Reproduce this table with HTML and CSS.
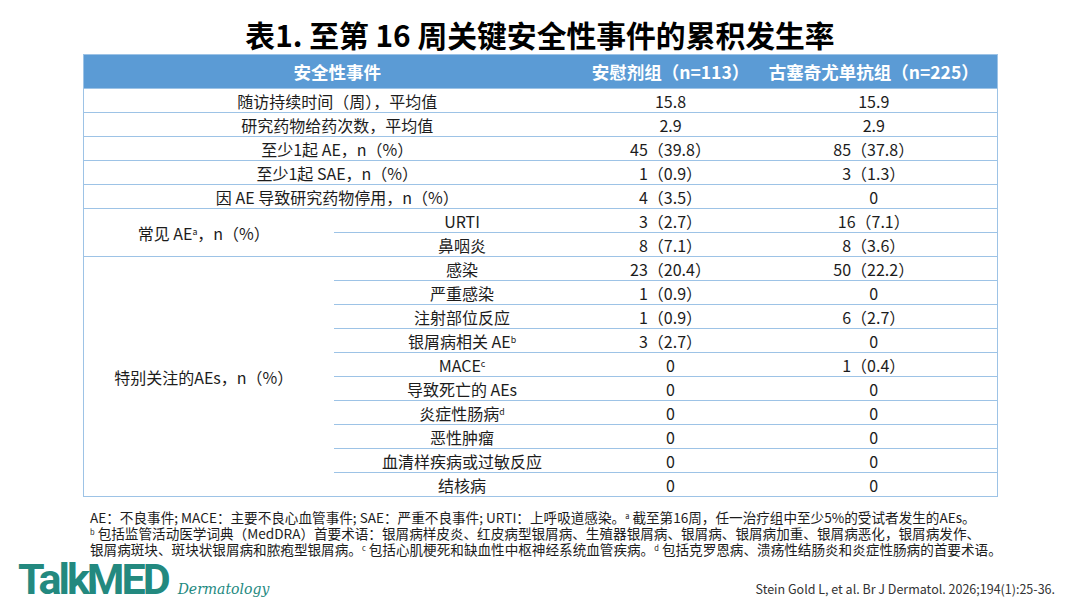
FILE: index.html
```html
<!DOCTYPE html>
<html lang="zh-CN">
<head>
<meta charset="utf-8">
<title>表1</title>
<link rel="stylesheet" href="styles.css">
</head>
<body>
<h1 class="title">表1. 至第 16 周关键安全性事件的累积发生率</h1>
<table class="tbl">
  <colgroup>
    <col class="c-a"><col class="c-b"><col class="c-c"><col class="c-d">
  </colgroup>
  <thead>
    <tr><th colspan="2">安全性事件</th><th>安慰剂组（n=113）</th><th>古塞奇尤单抗组（n=225）</th></tr>
  </thead>
  <tbody>
    <tr><td colspan="2">随访持续时间（周），平均值</td><td>15.8</td><td>15.9</td></tr>
    <tr><td colspan="2">研究药物给药次数，平均值</td><td>2.9</td><td>2.9</td></tr>
    <tr><td colspan="2">至少1起 AE，n（%）</td><td>45（39.8）</td><td>85（37.8）</td></tr>
    <tr><td colspan="2">至少1起 SAE，n（%）</td><td>1（0.9）</td><td>3（1.3）</td></tr>
    <tr><td colspan="2">因 AE 导致研究药物停用，n（%）</td><td>4（3.5）</td><td>0</td></tr>
    <tr class="grp"><td rowspan="2" class="lab">常见 AE<sup>a</sup>，n（%）</td><td>URTI</td><td>3（2.7）</td><td>16（7.1）</td></tr>
    <tr><td>鼻咽炎</td><td>8（7.1）</td><td>8（3.6）</td></tr>
    <tr class="grp"><td rowspan="11" class="lab">特别关注的AEs，n（%）</td><td>感染</td><td>23（20.4）</td><td>50（22.2）</td></tr>
    <tr><td>严重感染</td><td>1（0.9）</td><td>0</td></tr>
    <tr><td>注射部位反应</td><td>1（0.9）</td><td>6（2.7）</td></tr>
    <tr><td>银屑病相关 AE<sup>b</sup></td><td>3（2.7）</td><td>0</td></tr>
    <tr><td>MACE<sup>c</sup></td><td>0</td><td>1（0.4）</td></tr>
    <tr><td>导致死亡的 AEs</td><td>0</td><td>0</td></tr>
    <tr><td>炎症性肠病<sup>d</sup></td><td>0</td><td>0</td></tr>
    <tr><td>恶性肿瘤</td><td>0</td><td>0</td></tr>
    <tr><td>血清样疾病或过敏反应</td><td>0</td><td>0</td></tr>
    <tr><td>结核病</td><td>0</td><td>0</td></tr>
  </tbody>
</table>
<div class="notes">
  <p class="note-line">AE：不良事件; MACE：主要不良心血管事件; SAE：严重不良事件; URTI：上呼吸道感染。<sup>a</sup> 截至第16周，任一治疗组中至少5%的受试者发生的AEs。</p>
  <p class="note-line"><sup>b</sup> 包括监管活动医学词典（MedDRA）首要术语：银屑病样皮炎、红皮病型银屑病、生殖器银屑病、银屑病、银屑病加重、银屑病恶化，银屑病发作、</p>
  <p class="note-line">银屑病斑块、斑块状银屑病和脓疱型银屑病。<sup>c</sup> 包括心肌梗死和缺血性中枢神经系统血管疾病。<sup>d</sup> 包括克罗恩病、溃疡性结肠炎和炎症性肠病的首要术语。</p>
</div>
<footer class="footer">
  <div class="logo"><span class="logo-main">TalkMED</span><span class="logo-sub">Dermatology</span></div>
  <div class="cite">Stein Gold L, et al. Br J Dermatol. 2026;194(1):25-36.</div>
</footer>
</body>
</html>
```

FILE: styles.css
```css
html, body {
  margin: 0;
  padding: 0;
}
body {
  width: 1080px;
  height: 608px;
  overflow: hidden;
  background: #ffffff;
  font-family: "Noto Sans CJK SC", "Noto Sans", sans-serif;
  color: #1c1c1c;
  display: flex;
  flex-direction: column;
}
.title {
  margin: 14px 0 0;
  height: 41px;
  line-height: 40px;
  text-align: center;
  font-size: 29.8px;
  font-weight: 700;
  color: #000;
}
.tbl {
  margin-left: 83px;
  width: 914px;
  border-collapse: collapse;
  table-layout: fixed;
  font-size: 16px;
  border: 1.5px solid #9dc3e6;
}
.c-a { width: 250px; }
.c-b { width: 257px; }
.c-c { width: 160px; }
.c-d { width: 247px; }
.tbl th, .tbl td {
  padding: 0;
  text-align: center;
  white-space: nowrap;
}
.tbl thead th {
  background: #5b9bd5;
  color: #ffffff;
  height: 33px;
  font-size: 17.5px;
  font-weight: 700;
}
.tbl tbody td {
  height: 23px;
  line-height: 22px;
  border-top: 1px solid #9dc3e6;
}
.tbl .lab {
  padding-right: 10px;
}
.tbl sup, .notes sup {
  font-size: 0.55em;
  vertical-align: 0.6em;
  line-height: 0;
}
.notes {
  margin: 12px 0 0 90px;
  font-size: 13.6px;
  color: #1c1c1c;
}
.note-line {
  margin: 0;
  height: 16px;
  line-height: 16px;
  white-space: nowrap;
}
.footer {
  margin-top: auto;
  display: flex;
  justify-content: space-between;
  align-items: flex-end;
  padding: 0 25px 7px 18px;
}
.logo {
  display: flex;
  align-items: baseline;
  color: #23897f;
}
.logo-main {
  font-family: Roboto, "Liberation Sans", sans-serif;
  font-weight: 700;
  font-size: 43px;
  letter-spacing: -3px;
  line-height: 44px;
}
.logo-sub {
  font-family: "DejaVu Serif", "Liberation Serif", serif;
  font-style: italic;
  font-size: 14px;
  margin-left: 10px;
}
.cite {
  font-size: 12.5px;
  color: #333;
  padding-bottom: 3px;
}
```
